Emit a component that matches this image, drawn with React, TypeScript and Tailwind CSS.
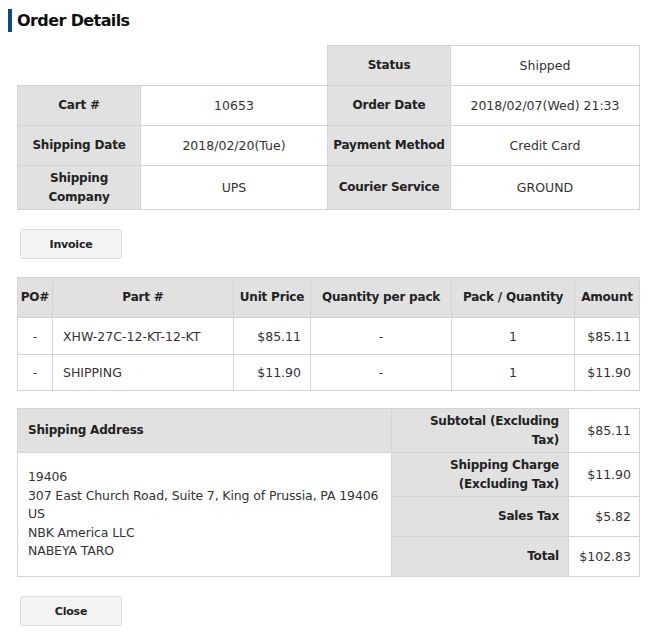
const font = { fontFamily: '"DejaVu Sans", Verdana, sans-serif' };

const cellBorder = "border border-[#d4d4d4]";
const label = `${cellBorder} bg-[#e1e1e1] text-[12px] font-bold tracking-[-0.2px] text-[#222]`;
const value = `${cellBorder} bg-white text-[#333]`;

const ITEMS = [
  { po: "-", part: "XHW-27C-12-KT-12-KT", unit: "$85.11", perPack: "-", packs: "1", amount: "$85.11", h: "h-[37px]" },
  { po: "-", part: "SHIPPING", unit: "$11.90", perPack: "-", packs: "1", amount: "$11.90", h: "h-[36px]" },
];

const TOTALS: [string, string][] = [
  ["Subtotal (Excluding Tax)", "$85.11"],
  ["Shipping Charge (Excluding Tax)", "$11.90"],
  ["Sales Tax", "$5.82"],
  ["Total", "$102.83"],
];

const ADDRESS = [
  "19406",
  "307 East Church Road, Suite 7, King of Prussia, PA 19406",
  "US",
  "NBK America LLC",
  "NABEYA TARO",
];

function Button({ children }: { children: string }) {
  return (
    <button className="ml-[20px] h-[30px] w-[102px] rounded-[3px] border border-[#dcdcdc] bg-[#f3f3f3] text-[11px] font-bold tracking-[-0.2px] text-[#222]">
      {children}
    </button>
  );
}

export default function App() {
  return (
    <div className="min-h-[635px] w-[650px] bg-white text-[12.5px] leading-[19px]" style={font}>
      <div className="flex items-center pl-[8px] pt-[9px]">
        <span className="h-[23px] w-[4px] bg-[#0b4a8b]" />
        <h1 className="ml-[5px] text-[16px] font-bold leading-[22px] tracking-[-0.6px] text-[#111]">
          Order Details
        </h1>
      </div>

      <table className="ml-[17px] mt-[13px] w-[622px] table-fixed border-collapse text-center">
        <colgroup>
          <col className="w-[123px]" />
          <col className="w-[187px]" />
          <col className="w-[123px]" />
          <col className="w-[189px]" />
        </colgroup>
        <tbody>
          <tr className="h-[40px]">
            <td />
            <td />
            <td className={label}>Status</td>
            <td className={value}>Shipped</td>
          </tr>
          <tr className="h-[40px]">
            <td className={label}>Cart #</td>
            <td className={value}>10653</td>
            <td className={label}>Order Date</td>
            <td className={value}>2018/02/07(Wed) 21:33</td>
          </tr>
          <tr className="h-[40px]">
            <td className={label}>Shipping Date</td>
            <td className={value}>2018/02/20(Tue)</td>
            <td className={label}>Payment Method</td>
            <td className={value}>Credit Card</td>
          </tr>
          <tr className="h-[44px]">
            <td className={`${label} px-[10px] py-[2px]`}>Shipping Company</td>
            <td className={value}>UPS</td>
            <td className={label}>Courier Service</td>
            <td className={value}>GROUND</td>
          </tr>
        </tbody>
      </table>

      <div className="mt-[19px]">
        <Button>Invoice</Button>
      </div>

      <table className="ml-[17px] mt-[18px] w-[622px] table-fixed border-collapse">
        <colgroup>
          <col className="w-[35px]" />
          <col className="w-[181px]" />
          <col className="w-[77px]" />
          <col className="w-[141px]" />
          <col className="w-[123px]" />
          <col className="w-[65px]" />
        </colgroup>
        <thead>
          <tr className="h-[40px] text-center">
            <th className={label}>PO#</th>
            <th className={label}>Part #</th>
            <th className={label}>Unit Price</th>
            <th className={label}>Quantity per pack</th>
            <th className={label}>Pack / Quantity</th>
            <th className={label}>Amount</th>
          </tr>
        </thead>
        <tbody>
          {ITEMS.map((it) => (
            <tr key={it.part} className={it.h}>
              <td className={`${value} text-center`}>{it.po}</td>
              <td className={`${value} px-[10px] text-left`}>{it.part}</td>
              <td className={`${value} px-[9px] text-right`}>{it.unit}</td>
              <td className={`${value} text-center`}>{it.perPack}</td>
              <td className={`${value} text-center`}>{it.packs}</td>
              <td className={`${value} px-[8px] text-right`}>{it.amount}</td>
            </tr>
          ))}
        </tbody>
      </table>

      <table className="ml-[17px] mt-[17px] w-[622px] table-fixed border-collapse">
        <colgroup>
          <col className="w-[374px]" />
          <col className="w-[177px]" />
          <col className="w-[71px]" />
        </colgroup>
        <tbody>
          {TOTALS.map(([name, amount], i) => (
            <tr key={name} className={i < 2 ? "h-[44px]" : "h-[40px]"}>
              {i === 0 && <td className={`${label} px-[10px] text-left`}>Shipping Address</td>}
              {i === 1 && (
                <td
                  rowSpan={3}
                  className={`${value} whitespace-nowrap pl-[10px] pr-[2px] align-middle leading-[18.5px] tracking-[-0.12px]`}
                >
                  {ADDRESS.map((line) => (
                    <div key={line}>{line}</div>
                  ))}
                </td>
              )}
              <td className={`${label} py-[2px] pl-[10px] pr-[9px] text-right`}>{name}</td>
              <td className={`${value} px-[8px] text-right`}>{amount}</td>
            </tr>
          ))}
        </tbody>
      </table>

      <div className="mt-[19px] pb-[9px]">
        <Button>Close</Button>
      </div>
    </div>
  );
}
